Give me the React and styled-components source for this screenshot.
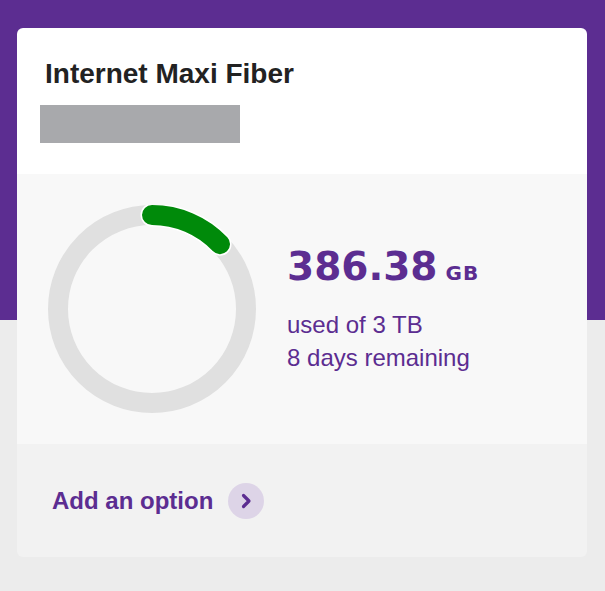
import React from "react";
import styled, { createGlobalStyle } from "styled-components";

const usage = { used: 386.38, total: 3000, unit: "GB", totalLabel: "3 TB", daysLeft: 8 };

const GlobalStyle = createGlobalStyle`
  body {
    margin: 0;
    font-family: "Liberation Sans", Arial, sans-serif;
    background: #ececec;
  }
`;

const Page = styled.div`
  min-height: 100vh;
  box-sizing: border-box;
  padding: 28px 18px 34px 17px;
  background: linear-gradient(#5c2d91 0, #5c2d91 320px, #ececec 320px);
`;

const Card = styled.div`
  width: 570px;
  border-radius: 6px;
  overflow: hidden;
  display: flex;
  flex-direction: column;
`;

const Header = styled.div`
  background: #fff;
  padding: 30px 0 31px 23px;
`;

const Title = styled.h2`
  margin: 0 0 15px 5px;
  font-size: 28px;
  line-height: 32px;
  font-weight: 700;
  color: #222;
`;

const Masked = styled.div`
  width: 200px;
  height: 38px;
  background: #a8a9ac;
`;

const Usage = styled.div`
  height: 270px;
  background: #f8f8f8;
  display: flex;
  align-items: center;
  gap: 31px;
  padding-left: 31px;
`;

const Figures = styled.div`
  color: #5c2d91;
`;

const Amount = styled.div`
  font-family: "DejaVu Sans", sans-serif;
  font-weight: 700;
  font-size: 39px;
  line-height: 44px;
  margin-bottom: 13px;
`;

const Unit = styled.span`
  font-size: 20px;
  letter-spacing: 1px;
  margin-left: 8px;
`;

const Line = styled.div`
  font-size: 24px;
  line-height: 33px;
`;

const Footer = styled.div`
  height: 113px;
  background: #f2f2f2;
  display: flex;
  align-items: center;
  gap: 15px;
  padding-left: 35px;
`;

const OptionLink = styled.a`
  font-size: 24px;
  font-weight: 700;
  color: #5c2d91;
  text-decoration: none;
`;

const Arrow = styled.span`
  width: 36px;
  height: 36px;
  border-radius: 50%;
  background: #ddd4e7;
  display: flex;
  align-items: center;
  justify-content: center;
`;

const Ring = ({ value, total }) => {
  const r = 94;
  const c = 104;
  const angle = (value / total) * 2 * Math.PI;
  const x = c + r * Math.sin(angle);
  const y = c - r * Math.cos(angle);
  const arc = `M${c} ${c - r} A${r} ${r} 0 ${angle > Math.PI ? 1 : 0} 1 ${x.toFixed(2)} ${y.toFixed(2)}`;
  return (
    <svg width="208" height="208" viewBox="0 0 208 208">
      <circle cx={c} cy={c} r={r} fill="none" stroke="#e0e0e0" strokeWidth="20" />
      <path d={arc} fill="none" stroke="#fff" strokeWidth="23" strokeLinecap="round" />
      <path d={arc} fill="none" stroke="#008a0a" strokeWidth="20" strokeLinecap="round" />
    </svg>
  );
};

const App = () => (
  <>
    <GlobalStyle />
    <Page>
      <Card>
        <Header>
          <Title>Internet Maxi Fiber</Title>
          <Masked />
        </Header>
        <Usage>
          <Ring value={usage.used} total={usage.total} />
          <Figures>
            <Amount>
              {usage.used}
              <Unit>{usage.unit}</Unit>
            </Amount>
            <Line>used of {usage.totalLabel}</Line>
            <Line>{usage.daysLeft} days remaining</Line>
          </Figures>
        </Usage>
        <Footer>
          <OptionLink href="#">Add an option</OptionLink>
          <Arrow>
            <svg width="14" height="16" viewBox="0 0 14 16">
              <polyline points="4.5,2.5 10,8 4.5,13.5" fill="none" stroke="#5c2d91" strokeWidth="3.2" strokeLinecap="round" strokeLinejoin="round" />
            </svg>
          </Arrow>
        </Footer>
      </Card>
    </Page>
  </>
);

export default App;
